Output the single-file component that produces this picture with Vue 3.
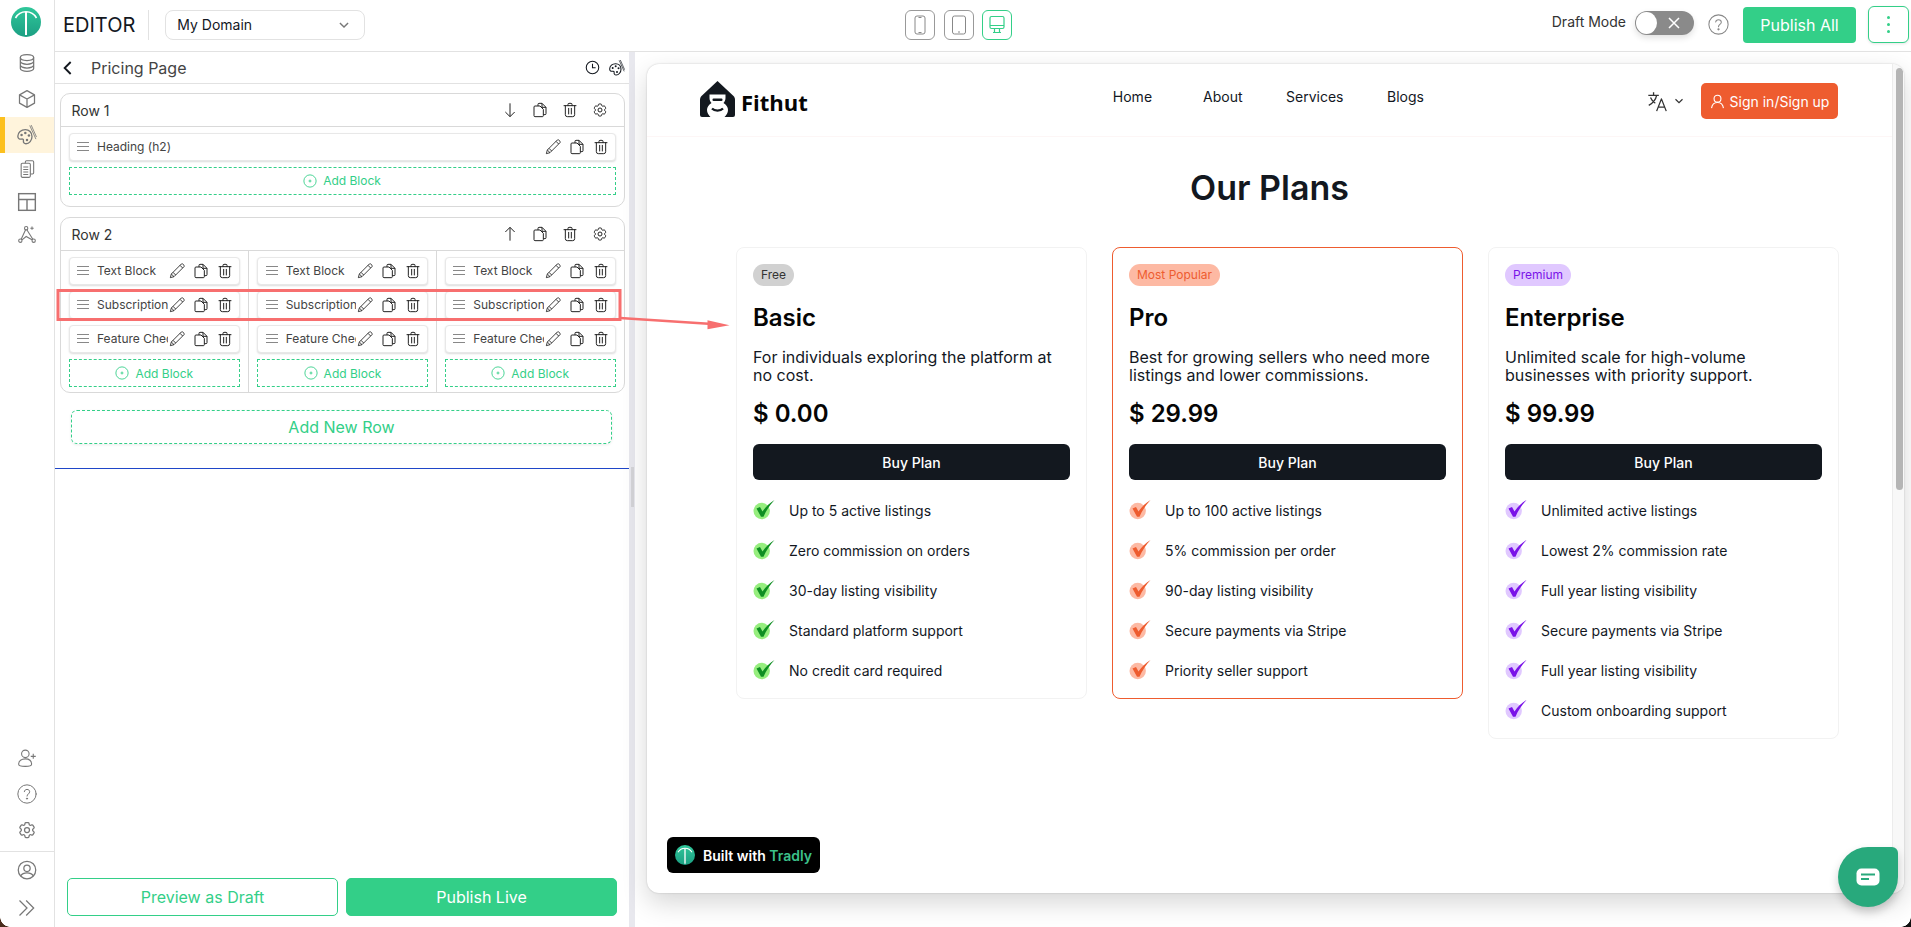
<script setup>
const topNav = [
  { icon: "i-db" },
  { icon: "i-cube" },
  { icon: "i-palette", active: true },
  { icon: "i-pages" },
  { icon: "i-layout" },
  { icon: "i-network" },
];
const bottomNav = ["i-user-plus", "i-help", "i-gear"];

const rowTwoBlocks = ["Text Block", "Subscription Block", "Feature Checklist"];

const links = ["Home", "About", "Services", "Blogs"];

const plans = [
  {
    tone: "free",
    badge: "Free",
    name: "Basic",
    desc: "For individuals exploring the platform at no cost.",
    price: "$ 0.00",
    features: [
      "Up to 5 active listings",
      "Zero commission on orders",
      "30-day listing visibility",
      "Standard platform support",
      "No credit card required",
    ],
  },
  {
    tone: "popular",
    badge: "Most Popular",
    name: "Pro",
    desc: "Best for growing sellers who need more listings and lower commissions.",
    price: "$ 29.99",
    features: [
      "Up to 100 active listings",
      "5% commission per order",
      "90-day listing visibility",
      "Secure payments via Stripe",
      "Priority seller support",
    ],
  },
  {
    tone: "premium",
    badge: "Premium",
    name: "Enterprise",
    desc: "Unlimited scale for high-volume businesses with priority support.",
    price: "$ 99.99",
    features: [
      "Unlimited active listings",
      "Lowest 2% commission rate",
      "Full year listing visibility",
      "Secure payments via Stripe",
      "Full year listing visibility",
      "Custom onboarding support",
    ],
  },
];
</script>

<template>
  <div class="app">
    <svg class="sprite" aria-hidden="true">
      <defs>
        <linearGradient id="tradly" x1="0" y1="0" x2="0" y2="1">
          <stop offset="0" stop-color="#2fc79a" />
          <stop offset="1" stop-color="#1c9f83" />
        </linearGradient>
      </defs>
      <symbol id="i-tradly" viewBox="0 0 30 30">
        <circle cx="15" cy="15" r="15" fill="url(#tradly)" />
        <path d="M4.500 11C7 6.500 10.500 4.800 15 4.800S23 6.500 25.500 11" fill="none" stroke="#fff" stroke-width="1.600" />
        <path d="M15 5v23" stroke="#fff" stroke-width="2" />
      </symbol>
      <symbol id="i-db" viewBox="0 0 24 24" fill="none" stroke="currentColor" stroke-width="1.500">
        <ellipse cx="12" cy="5.500" rx="8" ry="3.500" />
        <path d="M4 5.500v13c0 1.900 3.600 3.500 8 3.500s8-1.600 8-3.500v-13M4 10c0 1.900 3.600 3.500 8 3.500s8-1.600 8-3.500M4 14.500c0 1.900 3.600 3.500 8 3.500s8-1.600 8-3.500" />
      </symbol>
      <symbol id="i-cube" viewBox="0 0 24 24" fill="none" stroke="currentColor" stroke-width="1.500" stroke-linejoin="round">
        <path d="M12 2l9 5v10l-9 5-9-5V7zM3 7l9 5 9-5M12 12v10" />
      </symbol>
      <symbol id="i-palette" viewBox="0 0 24 24" fill="none" stroke="currentColor" stroke-width="1.600" stroke-linecap="round" stroke-linejoin="round">
        <path d="M10 5.500C5 5.500 1 9 1 13.500c0 3 2.300 3.800 4.300 3.400 1.800-.3 2.700.5 2.400 2-.3 1.900.9 3.600 3 3.600 4 0 7.300-4 7.300-8.700C18 9 14.500 5.500 10 5.500z" />
        <circle cx="5.500" cy="12" r="1.500" fill="currentColor" stroke="none" />
        <circle cx="10" cy="9.500" r="1.500" fill="currentColor" stroke="none" />
        <circle cx="14.300" cy="12.500" r="1.500" fill="currentColor" stroke="none" />
        <circle cx="12" cy="18" r="1.500" fill="currentColor" stroke="none" />
        <path d="M15.500 1l7 15.500M17.200.5l6 13.500" stroke-width="1" />
      </symbol>
      <symbol id="i-pages" viewBox="0 0 24 24" fill="none" stroke="currentColor" stroke-width="1.300" stroke-linejoin="round">
        <path d="M10 5V3.500A1.500 1.500 0 0 1 11.500 2h7A1.500 1.500 0 0 1 20 3.500v13a1.500 1.500 0 0 1-1.500 1.500H16" />
        <rect x="5" y="5" width="11" height="17" rx="1.500" />
        <path d="M7.500 9.500h6M7.500 12.500h6M7.500 15.500h6M7.500 18.500h6" />
      </symbol>
      <symbol id="i-layout" viewBox="0 0 24 24" fill="none" stroke="currentColor" stroke-width="1.700">
        <rect x="2" y="2" width="20" height="20" />
        <path d="M2 9h20M12 9v13" />
      </symbol>
      <symbol id="i-network" viewBox="0 0 24 24" fill="none" stroke="currentColor" stroke-width="1.300">
        <circle cx="11" cy="5" r="2" />
        <circle cx="4" cy="20" r="2" />
        <circle cx="20" cy="20" r="2" />
        <path d="M10.300 7L5 18.300M11.800 7L19 18.300M6 19l5-4 7 4M18 3v4M16 5h4" />
      </symbol>
      <symbol id="i-user-plus" viewBox="0 0 24 24" fill="none" stroke="currentColor" stroke-width="1.300">
        <circle cx="10" cy="7" r="4.500" />
        <path d="M2 19.500C2 15.500 5.500 13 10 13s7.500 2.500 7.500 6.500c0 1.500-3 2.500-7.500 2.500s-8-1-8-2.500zM19.500 7v6M16.500 10h6" />
      </symbol>
      <symbol id="i-help" viewBox="0 0 24 24" fill="none" stroke="currentColor" stroke-width="1.200" stroke-linecap="round">
        <circle cx="12" cy="12" r="11" />
        <path d="M8.800 9.200C9 7.400 10.300 6.500 12 6.500c1.900 0 3.200 1.100 3.200 2.800 0 2.600-3.200 2.600-3.200 5.200" />
        <circle cx="12" cy="17.500" r=".7" fill="currentColor" />
      </symbol>
      <symbol id="i-gear" viewBox="0 0 24 24" fill="none" stroke="currentColor" stroke-width="1.500" stroke-linejoin="round">
        <path d="M9.594 3.940c.09-.542.56-.94 1.110-.94h2.593c.55 0 1.020.398 1.110.94l.213 1.281c.063.374.313.686.645.870.074.040.147.083.22.127.325.196.72.257 1.075.124l1.217-.456a1.125 1.125 0 0 1 1.370.49l1.296 2.247a1.125 1.125 0 0 1-.26 1.431l-1.003.827c-.293.241-.438.613-.43.992a7.723 7.723 0 0 1 0 .255c-.008.378.137.75.43.991l1.004.827c.424.35.534.955.26 1.430l-1.298 2.247a1.125 1.125 0 0 1-1.369.491l-1.217-.456c-.355-.133-.75-.072-1.076.124a6.470 6.470 0 0 1-.22.128c-.331.183-.581.495-.644.869l-.213 1.281c-.09.543-.56.94-1.110.94h-2.594c-.55 0-1.019-.398-1.110-.94l-.213-1.281c-.062-.374-.312-.686-.644-.87a6.520 6.520 0 0 1-.22-.127c-.325-.196-.72-.257-1.076-.124l-1.217.456a1.125 1.125 0 0 1-1.369-.49l-1.297-2.247a1.125 1.125 0 0 1 .26-1.431l1.004-.827c.292-.24.437-.613.43-.991a6.932 6.932 0 0 1 0-.255c.007-.38-.138-.751-.43-.992l-1.004-.827a1.125 1.125 0 0 1-.26-1.430l1.297-2.247a1.125 1.125 0 0 1 1.370-.491l1.216.456c.356.133.751.072 1.076-.124.072-.044.146-.086.22-.128.332-.183.582-.495.644-.869l.214-1.280Z" />
        <circle cx="12" cy="12" r="3" />
      </symbol>
      <symbol id="i-profile" viewBox="0 0 24 24" fill="none" stroke="currentColor" stroke-width="1.500">
        <circle cx="12" cy="12" r="10.500" />
        <circle cx="12" cy="10" r="3.800" />
        <path d="M4.500 19c1.500-2.500 4-3.500 7.500-3.500s6 1 7.500 3.500" />
      </symbol>
      <symbol id="i-chevrons" viewBox="0 0 24 24" fill="none" stroke="currentColor" stroke-width="1.500">
        <path d="M3 3l9 9-9 9M11 3l9 9-9 9" />
      </symbol>
      <symbol id="i-chevron-down" viewBox="0 0 24 24" fill="none" stroke="currentColor" stroke-width="2.400">
        <path d="M5 8.500l7 7 7-7" />
      </symbol>
      <symbol id="i-back" viewBox="0 0 24 24" fill="none" stroke="currentColor" stroke-width="2.800">
        <path d="M16 3l-9 9 9 9" />
      </symbol>
      <symbol id="i-clock" viewBox="0 0 24 24" fill="none" stroke="currentColor" stroke-width="1.700">
        <circle cx="12" cy="12" r="10" />
        <path d="M12 6v6.500h5" />
      </symbol>
      <symbol id="i-down" viewBox="0 0 24 24" fill="none" stroke="currentColor" stroke-width="1.500">
        <path d="M12 2v20M5 15l7 7 7-7" />
      </symbol>
      <symbol id="i-up" viewBox="0 0 24 24" fill="none" stroke="currentColor" stroke-width="1.500">
        <path d="M12 22V2M5 9l7-7 7 7" />
      </symbol>
      <symbol id="i-copy" viewBox="0 0 24 24" fill="none" stroke="currentColor" stroke-width="1.500" stroke-linejoin="round">
        <path d="M9 6V3.500A1.500 1.500 0 0 1 10.500 2H15l6 6v9.500a1.500 1.500 0 0 1-1.500 1.500H17M15 2v6h6" />
        <path d="M4.500 6H12l5 5v9.500a1.500 1.500 0 0 1-1.500 1.500h-11A1.500 1.500 0 0 1 3 20.500v-13A1.500 1.500 0 0 1 4.500 6z" />
      </symbol>
      <symbol id="i-trash" viewBox="0 0 24 24" fill="none" stroke="currentColor" stroke-width="1.500" stroke-linecap="round">
        <path d="M3 5.500h18M9 5.500V3.500A1.500 1.500 0 0 1 10.500 2h3A1.500 1.500 0 0 1 15 3.500v2M5 5.500V19a3 3 0 0 0 3 3h8a3 3 0 0 0 3-3V5.500M10 9.500v8.500M14 9.500v8.500" />
      </symbol>
      <symbol id="i-pencil" viewBox="0 0 24 24" fill="none" stroke="currentColor" stroke-width="1.300" stroke-linejoin="round">
        <path d="M2 22l1.500-5.500L18.500 1.500a1.500 1.500 0 0 1 2.100 0l1.900 1.900a1.500 1.500 0 0 1 0 2.100L7.500 20.500zM3.500 16.500l4 4M6 14l4 4M16.500 3.500l4 4" />
      </symbol>
      <symbol id="i-plus-circle" viewBox="0 0 24 24" fill="none" stroke="currentColor" stroke-width="1.500">
        <circle cx="12" cy="12" r="10.500" />
        <path d="M12 9.500v5M9.500 12h5" />
      </symbol>
      <symbol id="i-phone" viewBox="0 0 16 20" fill="none" stroke="currentColor" stroke-width="1">
        <rect x="3" y="1" width="10" height="18" rx="2" />
        <path d="M6.500 2.500h3M6.500 17.500h3" />
      </symbol>
      <symbol id="i-tablet" viewBox="0 0 16 20" fill="none" stroke="currentColor" stroke-width="1">
        <rect x="1.500" y="1" width="13" height="18" rx="2" />
        <path d="M7 17h2" />
      </symbol>
      <symbol id="i-desktop" viewBox="0 0 16 20" fill="none" stroke="currentColor" stroke-width="1.200">
        <rect x="1" y="1.500" width="14" height="12" rx="1.500" />
        <path d="M1 10.500h14M5.500 13.500v3.500M10.500 13.500v3.500M4 17.500h8" />
      </symbol>
      <symbol id="i-translate" viewBox="0 0 24 24" fill="none" stroke="currentColor" stroke-width="1.500" stroke-linejoin="round">
        <path d="M1.500 5h12M7.500 1.500V5M11 5c-1 5-4.500 9-9 11.500M4 7.500c1.200 3 3 5 5.500 6.500M11 23l5.500-14L22 23M12.700 18.500h7.600" />
      </symbol>
      <symbol id="i-user" viewBox="0 0 24 24" fill="none" stroke="currentColor" stroke-width="1.800">
        <circle cx="12" cy="7.500" r="5.500" />
        <path d="M2.500 22.500c.7-5.500 4.500-9 9.500-9s8.800 3.500 9.500 9" />
      </symbol>
      <symbol id="i-check" viewBox="0 0 22 20">
        <circle cx="8.700" cy="11" r="8.200" fill="var(--check-soft)" />
        <path d="M3.500 8.500L7 7l2.500 4.500C12.500 7 16.500 3 21.500 0 17 5 13 10.500 10.500 16.800H8z" fill="var(--check-strong)" />
      </symbol>
    </svg>

    <aside class="rail">
      <svg class="rail-logo"><use href="#i-tradly" /></svg>
      <div class="rail-top">
        <div v-for="item in topNav" :key="item.icon" class="rail-item" :class="{ active: item.active }">
          <svg class="rail-icon"><use :href="'#' + item.icon" /></svg>
        </div>
      </div>
      <div class="rail-bottom">
        <div v-for="icon in bottomNav" :key="icon" class="rail-item">
          <svg class="rail-icon"><use :href="'#' + icon" /></svg>
        </div>
        <div class="rail-sep"></div>
        <div class="rail-item">
          <svg class="rail-icon"><use href="#i-profile" /></svg>
        </div>
        <div class="rail-item last">
          <svg class="rail-icon"><use href="#i-chevrons" /></svg>
        </div>
      </div>
    </aside>

    <div class="main">
      <header class="topbar">
        <span class="brand">EDITOR</span>
        <div class="select">
          <span>My Domain</span>
          <svg class="select-arrow"><use href="#i-chevron-down" /></svg>
        </div>
        <div class="devices">
          <div class="device"><svg><use href="#i-phone" /></svg></div>
          <div class="device"><svg><use href="#i-tablet" /></svg></div>
          <div class="device on"><svg><use href="#i-desktop" /></svg></div>
        </div>
        <div class="top-actions">
          <span class="draft">Draft Mode</span>
          <div class="toggle">
            <span class="knob"></span>
            <svg class="toggle-x" viewBox="0 0 12 12"><path d="M1 1l10 10M11 1L1 11" stroke="#fff" stroke-width="1.500" /></svg>
          </div>
          <svg class="top-help"><use href="#i-help" /></svg>
          <button class="publish-all">Publish All</button>
          <button class="kebab"><i></i><i></i><i></i></button>
        </div>
      </header>

      <div class="workspace">
        <section class="panel">
          <div class="panel-head">
            <svg class="back"><use href="#i-back" /></svg>
            <span class="panel-title">Pricing Page</span>
            <svg class="head-icon clock"><use href="#i-clock" /></svg>
            <svg class="head-icon"><use href="#i-palette" /></svg>
          </div>

          <div class="row row-one">
            <div class="row-head">
              <span>Row 1</span>
              <div class="row-tools">
                <svg><use href="#i-down" /></svg>
                <svg><use href="#i-copy" /></svg>
                <svg><use href="#i-trash" /></svg>
                <svg><use href="#i-gear" /></svg>
              </div>
            </div>
            <div class="col">
              <div class="block">
                <span class="burger"><i></i><i></i><i></i></span>
                <span class="block-name">Heading (h2)</span>
                <svg><use href="#i-pencil" /></svg>
                <svg><use href="#i-copy" /></svg>
                <svg><use href="#i-trash" /></svg>
              </div>
              <div class="add-block">
                <svg><use href="#i-plus-circle" /></svg>
                Add Block
              </div>
            </div>
          </div>

          <div class="row">
            <div class="row-head">
              <span>Row 2</span>
              <div class="row-tools">
                <svg><use href="#i-up" /></svg>
                <svg><use href="#i-copy" /></svg>
                <svg><use href="#i-trash" /></svg>
                <svg><use href="#i-gear" /></svg>
              </div>
            </div>
            <div class="cols">
              <div v-for="n in 3" :key="n" class="col">
                <div v-for="name in rowTwoBlocks" :key="name" class="block">
                  <span class="burger"><i></i><i></i><i></i></span>
                  <span class="block-name">{{ name }}</span>
                  <svg><use href="#i-pencil" /></svg>
                  <svg><use href="#i-copy" /></svg>
                  <svg><use href="#i-trash" /></svg>
                </div>
                <div class="add-block">
                  <svg><use href="#i-plus-circle" /></svg>
                  Add Block
                </div>
              </div>
            </div>
          </div>

          <div class="add-row">Add New Row</div>
          <div class="drop-line"></div>

          <div class="panel-foot">
            <button class="btn-outline">Preview as Draft</button>
            <button class="btn-solid">Publish Live</button>
          </div>
        </section>

        <div class="gutter"><span></span></div>

        <section class="stage">
          <div class="window">
            <div class="page">
              <nav class="site-nav">
                <div class="site-logo">
                  <svg viewBox="0 0 35 36" class="gym">
                    <path d="M17.500 0l16 15c1 1 1.500 2.300 1.500 4v15a2 2 0 0 1-2 2H2a2 2 0 0 1-2-2V19c0-1.700.5-3 1.500-4z" fill="#13181f" />
                    <path d="M9.500 13.500h16v3.500c0 2-.8 3.600-2 5 3 1.800 4.500 4.300 4.500 7 0 2.800-1.500 5.200-3.500 7h-14c-2-1.800-3.500-4.200-3.500-7 0-2.700 1.500-5.200 4.500-7-1.200-1.400-2-3-2-5z" fill="#fff" />
                    <rect x="12.500" y="17.500" width="10" height="2.500" rx="1" fill="#13181f" />
                    <path d="M12 27.500c2.500 2.800 8.500 2.800 11 0" fill="none" stroke="#13181f" stroke-width="2.200" />
                  </svg>
                  <span>Fithut</span>
                </div>
                <div class="site-links">
                  <a v-for="link in links" :key="link">{{ link }}</a>
                </div>
                <div class="site-right">
                  <svg class="translate"><use href="#i-translate" /></svg>
                  <svg class="lang-arrow"><use href="#i-chevron-down" /></svg>
                  <button class="sign-in">
                    <svg><use href="#i-user" /></svg>
                    Sign in/Sign up
                  </button>
                </div>
              </nav>

              <h1 class="plans-title">Our Plans</h1>

              <div class="plans">
                <article v-for="plan in plans" :key="plan.name" class="plan" :class="plan.tone">
                  <span class="badge">{{ plan.badge }}</span>
                  <h2>{{ plan.name }}</h2>
                  <p class="desc">{{ plan.desc }}</p>
                  <div class="price">{{ plan.price }}</div>
                  <button class="buy">Buy Plan</button>
                  <ul>
                    <li v-for="(feature, i) in plan.features" :key="i">
                      <svg><use href="#i-check" /></svg>
                      {{ feature }}
                    </li>
                  </ul>
                </article>
              </div>
            </div>
            <div class="page-scroll"><span></span></div>
          </div>
        </section>
      </div>
    </div>

    <div class="built">
      <svg><use href="#i-tradly" /></svg>
      <span>Built with <b>Tradly</b></span>
    </div>

    <div class="chat">
      <svg viewBox="0 0 24 18" width="24" height="18">
        <rect x="0.500" y="0.500" width="23" height="17" rx="5" fill="#fff" />
        <path d="M5 6.500h14M5 11h8" stroke="#28a97c" stroke-width="2" />
      </svg>
    </div>

    <!-- annotation drawn on top of the screenshot -->
    <svg class="note" width="1911" height="927">
      <rect x="58" y="290.500" width="562" height="29" fill="none" stroke="#f76f6f" stroke-width="3" />
      <path d="M620 318l100 6.600" stroke="#f76f6f" stroke-width="2.500" fill="none" />
      <path d="M729.500 325.300l-22-5v9z" fill="#f76f6f" />
    </svg>
    <span class="corner left"></span>
    <span class="corner right"></span>
  </div>
</template>

<style scoped>
.app {
  position: relative;
  display: flex;
  width: 1911px;
  height: 927px;
  overflow: hidden;
  background: #fff;
  color: #13181f;
  font-family: Inter, "Liberation Sans", sans-serif;
}

.sprite {
  position: absolute;
  width: 0;
  height: 0;
}

.rail {
  display: flex;
  flex-direction: column;
  flex: 0 0 55px;
  box-sizing: border-box;
  padding-bottom: 1px;
  border-right: 1px solid #e2e2e2;
  color: #777;
}

.rail-logo {
  flex: none;
  width: 30px;
  height: 30px;
  margin: 7px 0 0 11px;
}

.rail-top {
  margin-top: 8px;
}

.rail-item {
  display: flex;
  align-items: center;
  justify-content: center;
  width: 54px;
  height: 36px;
  box-sizing: border-box;
}

.rail-top .rail-item:nth-child(n + 4) {
  height: 32.500px;
}

.rail-top .rail-item.active {
  border-left: 5px solid #fcc01e;
  padding-right: 5px;
  background: #fff4dc;
}

.rail-icon {
  width: 20px;
  height: 20px;
}

.rail-bottom {
  margin-top: auto;
}

.rail-sep {
  height: 1px;
  margin-top: 3px;
  background: #e2e2e2;
}

.rail-item.last {
  margin-top: 2px;
}

.main {
  display: flex;
  flex-direction: column;
  flex: 1;
  min-width: 0;
}

.topbar {
  position: relative;
  display: flex;
  align-items: center;
  flex: 0 0 52px;
  box-sizing: border-box;
  border-bottom: 1px solid #e2e2e2;
  padding: 0 2px 2px 8px;
}

.brand {
  padding-right: 13px;
  border-right: 1px solid #e2e2e2;
  font-size: 20px;
  line-height: 30px;
}

.select {
  display: flex;
  align-items: center;
  justify-content: space-between;
  box-sizing: border-box;
  width: 200px;
  height: 30px;
  margin-left: 16px;
  padding: 0 13px 0 11px;
  border: 1px solid #e2e2e2;
  border-radius: 8px;
  font-size: 14px;
}

.select-arrow {
  width: 14px;
  height: 14px;
  color: #777;
}

.devices {
  position: absolute;
  top: 10px;
  left: 850px;
  display: flex;
  gap: 8.500px;
}

.device {
  display: flex;
  align-items: center;
  justify-content: center;
  box-sizing: border-box;
  width: 30px;
  height: 30px;
  border: 1px solid #999;
  border-radius: 6px;
  color: #888;
}

.device svg {
  width: 16px;
  height: 20px;
}

.device.on {
  border-color: #33cf88;
  color: #33cf88;
}

.top-actions {
  display: flex;
  align-items: center;
  margin-left: auto;
}

.draft {
  margin: -6px 9px 0 0;
  color: #333;
  font-size: 14px;
}

.toggle {
  position: relative;
  width: 59px;
  height: 24px;
  margin-top: -4px;
  border-radius: 12px;
  background: #8a8a8a;
  box-shadow: 0 3px 6px rgba(0, 0, 0, 0.12);
}

.knob {
  position: absolute;
  top: 1px;
  left: 1px;
  width: 21px;
  height: 22px;
  border-radius: 50%;
  background: #fff;
}

.toggle-x {
  position: absolute;
  top: 6px;
  left: 33px;
  width: 12px;
  height: 12px;
}

.top-help {
  width: 21px;
  height: 21px;
  margin-left: 14px;
  color: #888;
}

.publish-all {
  width: 113px;
  height: 36px;
  margin-left: 14px;
  border: 0;
  border-radius: 4px;
  background: #33cf88;
  color: #fff;
  font: 16px Inter, sans-serif;
}

.kebab {
  display: flex;
  flex-direction: column;
  align-items: center;
  justify-content: center;
  gap: 4px;
  width: 41px;
  height: 37px;
  margin-left: 12px;
  padding: 0;
  border: 1px solid #33cf88;
  border-radius: 6px;
  background: #fff;
  box-shadow: 0 1px 3px rgba(0, 0, 0, 0.1);
}

.kebab i {
  width: 3px;
  height: 3px;
  border-radius: 50%;
  background: #33cf88;
}

.workspace {
  display: flex;
  flex: 1;
  min-height: 0;
}

.panel {
  display: flex;
  flex-direction: column;
  flex: 0 0 574px;
  box-sizing: border-box;
  padding-bottom: 11px;
}

.panel-head {
  display: flex;
  align-items: center;
  flex: 0 0 32px;
  box-sizing: border-box;
  border-bottom: 1px solid #e2e2e2;
  padding: 0 4px 0 5px;
}

.back {
  width: 16px;
  height: 16px;
}

.panel-title {
  margin-left: 15px;
  color: #444;
  font-size: 16px;
}

.head-icon {
  width: 16px;
  height: 16px;
}

.clock {
  margin: 0 9px 0 auto;
  width: 15px;
  height: 15px;
}

.row {
  box-sizing: border-box;
  width: 565px;
  margin: 10px 0 0 4.500px;
  border: 1px solid #d9d9d9;
  border-radius: 10px;
}

.row-one {
  margin-top: 9px;
}

.row-head {
  display: flex;
  align-items: center;
  justify-content: space-between;
  box-sizing: border-box;
  height: 33px;
  border-bottom: 1px solid #d9d9d9;
  padding: 0 16px 0 11px;
  color: #333;
  font-size: 14px;
}

.row-tools {
  display: flex;
  gap: 14px;
}

.row-tools svg {
  width: 16px;
  height: 16px;
  color: #222;
}

.cols {
  display: grid;
  grid-template-columns: repeat(3, 1fr);
}

.col {
  display: flex;
  flex-direction: column;
  gap: 6.500px;
  box-sizing: border-box;
  min-width: 0;
  padding: 6px 8px 5px;
  border-left: 1px solid #d9d9d9;
}

.col:first-child {
  border-left: 0;
}

.row-one > .col {
  border-left: 0;
  gap: 6px;
  padding-bottom: 11.500px;
}

.block {
  display: flex;
  align-items: center;
  gap: 8px;
  box-sizing: border-box;
  height: 27.500px;
  padding: 0 6px 0 7.500px;
  border: 1px solid #e8e8e8;
  border-radius: 4px;
  box-shadow: 0 1px 2px rgba(0, 0, 0, 0.14);
  background: #fff;
}

.block > svg {
  flex: none;
  width: 16px;
  height: 16px;
  color: #222;
}

.burger {
  display: flex;
  flex: none;
  flex-direction: column;
  gap: 3px;
  width: 12px;
}

.burger i {
  height: 1px;
  background: #888;
}

.block-name {
  flex: 1;
  min-width: 0;
  margin-right: -7px;
  overflow: hidden;
  color: #444;
  font-size: 12px;
  white-space: nowrap;
}

.add-block {
  display: flex;
  align-items: center;
  justify-content: center;
  gap: 6px;
  box-sizing: border-box;
  height: 28px;
  border: 1px dashed #33cf88;
  color: #33cf88;
  font-size: 12px;
}

.add-block svg {
  width: 14px;
  height: 14px;
}

.add-row {
  box-sizing: border-box;
  width: 541px;
  height: 34px;
  margin: 17px 0 0 16px;
  border: 1px dashed #33cf88;
  border-radius: 6px;
  box-shadow: 0 1px 3px rgba(0, 0, 0, 0.08);
  color: #33cf88;
  font-size: 16px;
  line-height: 32px;
  text-align: center;
}

.drop-line {
  height: 1px;
  margin-top: 24px;
  background: #1f46c8;
}

.panel-foot {
  display: flex;
  gap: 8px;
  margin: auto 0 0 12px;
}

.panel-foot button {
  box-sizing: border-box;
  width: 271px;
  height: 38px;
  border-radius: 5px;
  font: 16px Inter, sans-serif;
}

.btn-outline {
  border: 1px solid #33cf88;
  background: #fff;
  color: #33cf88;
}

.btn-solid {
  border: 1px solid #33cf88;
  background: #33cf88;
  color: #fff;
}

.gutter {
  flex: 0 0 6px;
  padding: 415px 0 0 2px;
  box-sizing: border-box;
  background: #e8e8ee;
}

.gutter span {
  display: block;
  width: 3px;
  height: 40px;
  background: #d4d4d8;
}

.stage {
  flex: 1;
  min-width: 0;
  padding: 12px 7px 0 12px;
}

.window {
  display: flex;
  height: 829px;
  overflow: hidden;
  border-radius: 12px;
  background: #fff;
  box-shadow: 0 10px 26px rgba(0, 0, 0, 0.16), 0 0 2px rgba(0, 0, 0, 0.2);
}

.page {
  flex: 1;
  min-width: 0;
}

.page-scroll {
  flex: 0 0 12px;
  box-sizing: border-box;
  padding: 4px 1px 0 3px;
  border-left: 1px solid #ececec;
  background: #f8f8f8;
}

.page-scroll span {
  display: block;
  height: 422px;
  border-radius: 4px;
  background: #b5b5b5;
}

.site-nav {
  display: flex;
  box-sizing: border-box;
  height: 73px;
  padding: 0 54px 0 53px;
  border-bottom: 1px solid #fdf6f6;
}

.site-logo {
  display: flex;
  align-items: flex-end;
  gap: 6px;
  height: 36px;
  margin-top: 17px;
  color: #050505;
  font-family: "Open Sans", sans-serif;
  font-size: 22px;
  font-weight: 700;
}

.site-logo span {
  line-height: 30px;
}

.gym {
  width: 35px;
  height: 36px;
}

.site-links {
  display: flex;
  gap: 43.500px;
  margin: 22px 0 0 305px;
  font-size: 14px;
  line-height: 22px;
}

.site-links a:first-child {
  margin-right: 7.500px;
}

.site-right {
  display: flex;
  align-items: center;
  height: 36px;
  margin: 19px 0 0 auto;
}

.translate {
  width: 21px;
  height: 21px;
  color: #333;
}

.lang-arrow {
  width: 12px;
  height: 12px;
  margin: 0 16px 0 5px;
  color: #333;
}

.sign-in {
  display: flex;
  align-items: center;
  justify-content: center;
  gap: 5px;
  width: 137px;
  height: 36px;
  border: 0;
  border-radius: 5px;
  background: #ee5c2f;
  color: #fff;
  font: 14px Inter, sans-serif;
}

.sign-in svg {
  width: 15px;
  height: 17px;
}

.plans-title {
  margin: 29px 0 0;
  font-size: 34px;
  font-weight: 600;
  line-height: 44px;
  text-align: center;
}

.plans {
  display: grid;
  grid-template-columns: repeat(3, 351px);
  align-items: start;
  gap: 25px;
  margin-top: 37px;
  padding-left: 89px;
}

.plan {
  --check-soft: #96ee7e;
  --check-strong: #0e8f22;
  box-sizing: border-box;
  padding: 16px 16px 18px;
  border: 1px solid #f2f2f2;
  border-radius: 8px;
}

.plan.popular {
  --check-soft: #fdb9a3;
  --check-strong: #ee5c2f;
  border-color: #ee5c2f;
}

.plan.premium {
  --check-soft: #e0c8ff;
  --check-strong: #7a12e8;
}

.badge {
  display: inline-block;
  height: 22px;
  padding: 0 8px;
  border-radius: 11px;
  background: #d1d1d1;
  color: #333;
  font-size: 12px;
  line-height: 22px;
  vertical-align: top;
}

.popular .badge {
  background: #fdb9a3;
  color: #ee5c2f;
}

.premium .badge {
  background: #e0c8ff;
  color: #7a12e8;
}

.plan h2 {
  margin: 16px 0 0;
  color: #050505;
  font-size: 24px;
  font-weight: 600;
  line-height: 32px;
}

.desc {
  margin: 14px 0 0;
  font-size: 16px;
  line-height: 18px;
}

.price {
  margin-top: 14px;
  color: #050505;
  font-size: 24px;
  font-weight: 600;
  line-height: 32px;
}

.buy {
  display: block;
  width: 100%;
  height: 36px;
  margin-top: 14px;
  border: 0;
  border-radius: 6px;
  background: #13181f;
  color: #fff;
  font: 500 14px Inter, sans-serif;
}

.plan ul {
  display: flex;
  flex-direction: column;
  gap: 20px;
  margin: 20px 0 0;
  padding: 0;
  list-style: none;
}

.plan li {
  display: flex;
  align-items: center;
  gap: 14px;
  height: 20px;
  font-size: 14px;
}

.plan li svg {
  flex: none;
  width: 22px;
  height: 20px;
}

.built {
  position: absolute;
  top: 837px;
  left: 667px;
  display: flex;
  align-items: center;
  gap: 8px;
  box-sizing: border-box;
  width: 153px;
  height: 36px;
  padding-left: 8px;
  border-radius: 6px;
  background: #000;
  color: #fff;
  font-size: 14px;
  font-weight: 600;
}

.built svg {
  width: 20px;
  height: 20px;
}

.built b {
  color: #3cc08a;
  font-weight: 600;
}

.chat {
  position: absolute;
  top: 847px;
  left: 1838px;
  display: flex;
  align-items: center;
  justify-content: center;
  width: 60px;
  height: 60px;
  border-radius: 50% 6px 50% 50%;
  background: #28a97c;
  box-shadow: 0 5px 10px rgba(0, 0, 0, 0.2);
}

.note {
  position: absolute;
  top: 0;
  left: 0;
  pointer-events: none;
}

.corner {
  position: absolute;
  bottom: 0;
  width: 10px;
  height: 10px;
}

.corner.left {
  left: 0;
  background: radial-gradient(circle at 100% 0, transparent 9.500px, #4a2c1c 10px);
}

.corner.right {
  right: 0;
  background: radial-gradient(circle at 0 0, transparent 9.500px, #111 10px);
}
</style>

<style>
html,
body {
  margin: 0;
  overflow: hidden;
  background: #fff;
}
</style>
